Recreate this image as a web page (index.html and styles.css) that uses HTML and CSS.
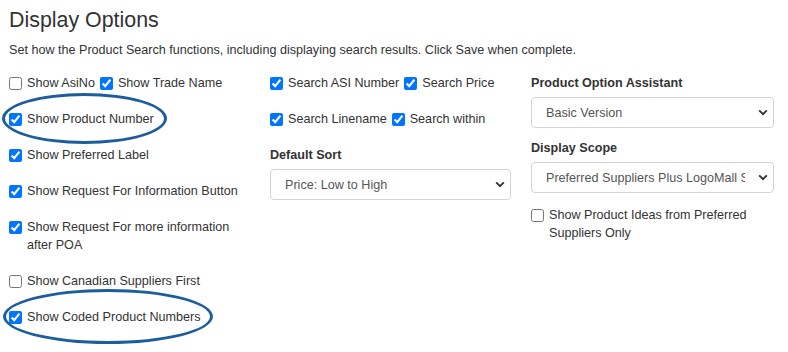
FILE: index.html
```html
<!DOCTYPE html>
<html lang="en">
<head>
    <meta charset="UTF-8">
    <meta name="viewport" content="width=device-width, initial-scale=1.0">
    <title>Display Options</title>
    <link rel="stylesheet" href="styles.css">
</head>
<body>
<div class="page">
    <h1 class="page-title">Display Options</h1>
    <p class="intro">Set how the Product Search functions, including displaying search results. Click Save when complete.</p>

    <div class="options">
        <div class="col">
            <div class="check-row">
                <label class="check"><input type="checkbox"><span>Show AsiNo</span></label>
                <label class="check"><input type="checkbox" checked><span>Show Trade Name</span></label>
            </div>
            <div class="check-row">
                <label class="check"><input type="checkbox" checked><span>Show Product Number</span></label>
                <span class="circled circled-one"></span>
            </div>
            <div class="check-row">
                <label class="check"><input type="checkbox" checked><span>Show Preferred Label</span></label>
            </div>
            <div class="check-row">
                <label class="check"><input type="checkbox" checked><span>Show Request For Information Button</span></label>
            </div>
            <div class="check-row">
                <label class="check"><input type="checkbox" checked><span>Show Request For more information after POA</span></label>
            </div>
            <div class="check-row">
                <label class="check"><input type="checkbox"><span>Show Canadian Suppliers First</span></label>
            </div>
            <div class="check-row">
                <label class="check"><input type="checkbox" checked><span>Show Coded Product Numbers</span></label>
                <span class="circled circled-two"></span>
            </div>
        </div>

        <div class="col">
            <div class="check-row">
                <label class="check"><input type="checkbox" checked><span>Search ASI Number</span></label>
                <label class="check"><input type="checkbox" checked><span>Search Price</span></label>
            </div>
            <div class="check-row">
                <label class="check"><input type="checkbox" checked><span>Search Linename</span></label>
                <label class="check"><input type="checkbox" checked><span>Search within</span></label>
            </div>
            <div class="form-group">
                <label class="field-label" for="default_sort">Default Sort</label>
                <div class="select-wrap">
                    <select id="default_sort" class="form-control">
                        <option>Price: Low to High</option>
                        <option>Price: High to Low</option>
                    </select>
                    <svg class="chevron" width="10" height="7" viewBox="0 0 10 7"><path d="M1.2 1.4 5 5.2 8.8 1.4" fill="none" stroke="#333" stroke-width="1.9"/></svg>
                </div>
            </div>
        </div>

        <div class="col">
            <div class="form-group">
                <label class="field-label" for="poa">Product Option Assistant</label>
                <div class="select-wrap">
                    <select id="poa" class="form-control">
                        <option>Basic Version</option>
                    </select>
                    <svg class="chevron" width="10" height="7" viewBox="0 0 10 7"><path d="M1.2 1.4 5 5.2 8.8 1.4" fill="none" stroke="#333" stroke-width="1.9"/></svg>
                </div>
            </div>
            <div class="form-group scope">
                <label class="field-label" for="scope">Display Scope</label>
                <div class="select-wrap">
                    <select id="scope" class="form-control">
                        <option>Preferred Suppliers Plus LogoMall Suppliers</option>
                    </select>
                    <svg class="chevron" width="10" height="7" viewBox="0 0 10 7"><path d="M1.2 1.4 5 5.2 8.8 1.4" fill="none" stroke="#333" stroke-width="1.9"/></svg>
                </div>
            </div>
            <div class="check-row ideas">
                <label class="check"><input type="checkbox"><span>Show Product Ideas from Preferred Suppliers Only</span></label>
            </div>
        </div>
    </div>
</div>
</body>
</html>
```

FILE: styles.css
```css
body {
    margin: 0;
    background-color: #fff;
    color: #333;
    font-family: "Liberation Sans", Arial, sans-serif;
    font-size: 12.6px;
    line-height: 18px;
}

.page {
    padding: 8px 9px;
}

.page-title {
    margin: 0;
    font-size: 21.4px;
    font-weight: normal;
    line-height: 24px;
}

.intro {
    margin: 9px 0 0;
}

.options {
    display: grid;
    grid-template-columns: 241px 241px 243px;
    column-gap: 20px;
    margin-top: 15px;
}

.check-row {
    position: relative;
    display: flex;
    gap: 5px;
    margin-bottom: 18px;
}

.check {
    display: flex;
    align-items: flex-start;
    gap: 5px;
}

.check input {
    width: 13px;
    height: 13px;
    margin: 3px 0 0;
    flex-shrink: 0;
    accent-color: #0075ff;
}

.circled {
    position: absolute;
    border: 3.5px solid #1c5d9e;
    border-radius: 50%;
    pointer-events: none;
}

.circled-one {
    left: -7px;
    top: -17px;
    width: 159px;
    height: 45px;
}

.circled-two {
    left: -6px;
    top: -19px;
    width: 204px;
    height: 49px;
}

.field-label {
    display: block;
    font-weight: bold;
    margin-bottom: 5px;
}

.form-group {
    margin-bottom: 11px;
}

.scope {
    margin-bottom: 13px;
}

.select-wrap {
    position: relative;
}

.form-control {
    display: block;
    width: 100%;
    height: 31px;
    margin: 0;
    padding: 0 28px 0 14px;
    border: 1px solid #d4d4d4;
    border-radius: 4px;
    background-color: #fff;
    color: #555;
    font-family: "Liberation Sans", Arial, sans-serif;
    font-size: 12.6px;
    -webkit-appearance: none;
    appearance: none;
}

.chevron {
    position: absolute;
    right: 6px;
    top: 12px;
    pointer-events: none;
}
```
